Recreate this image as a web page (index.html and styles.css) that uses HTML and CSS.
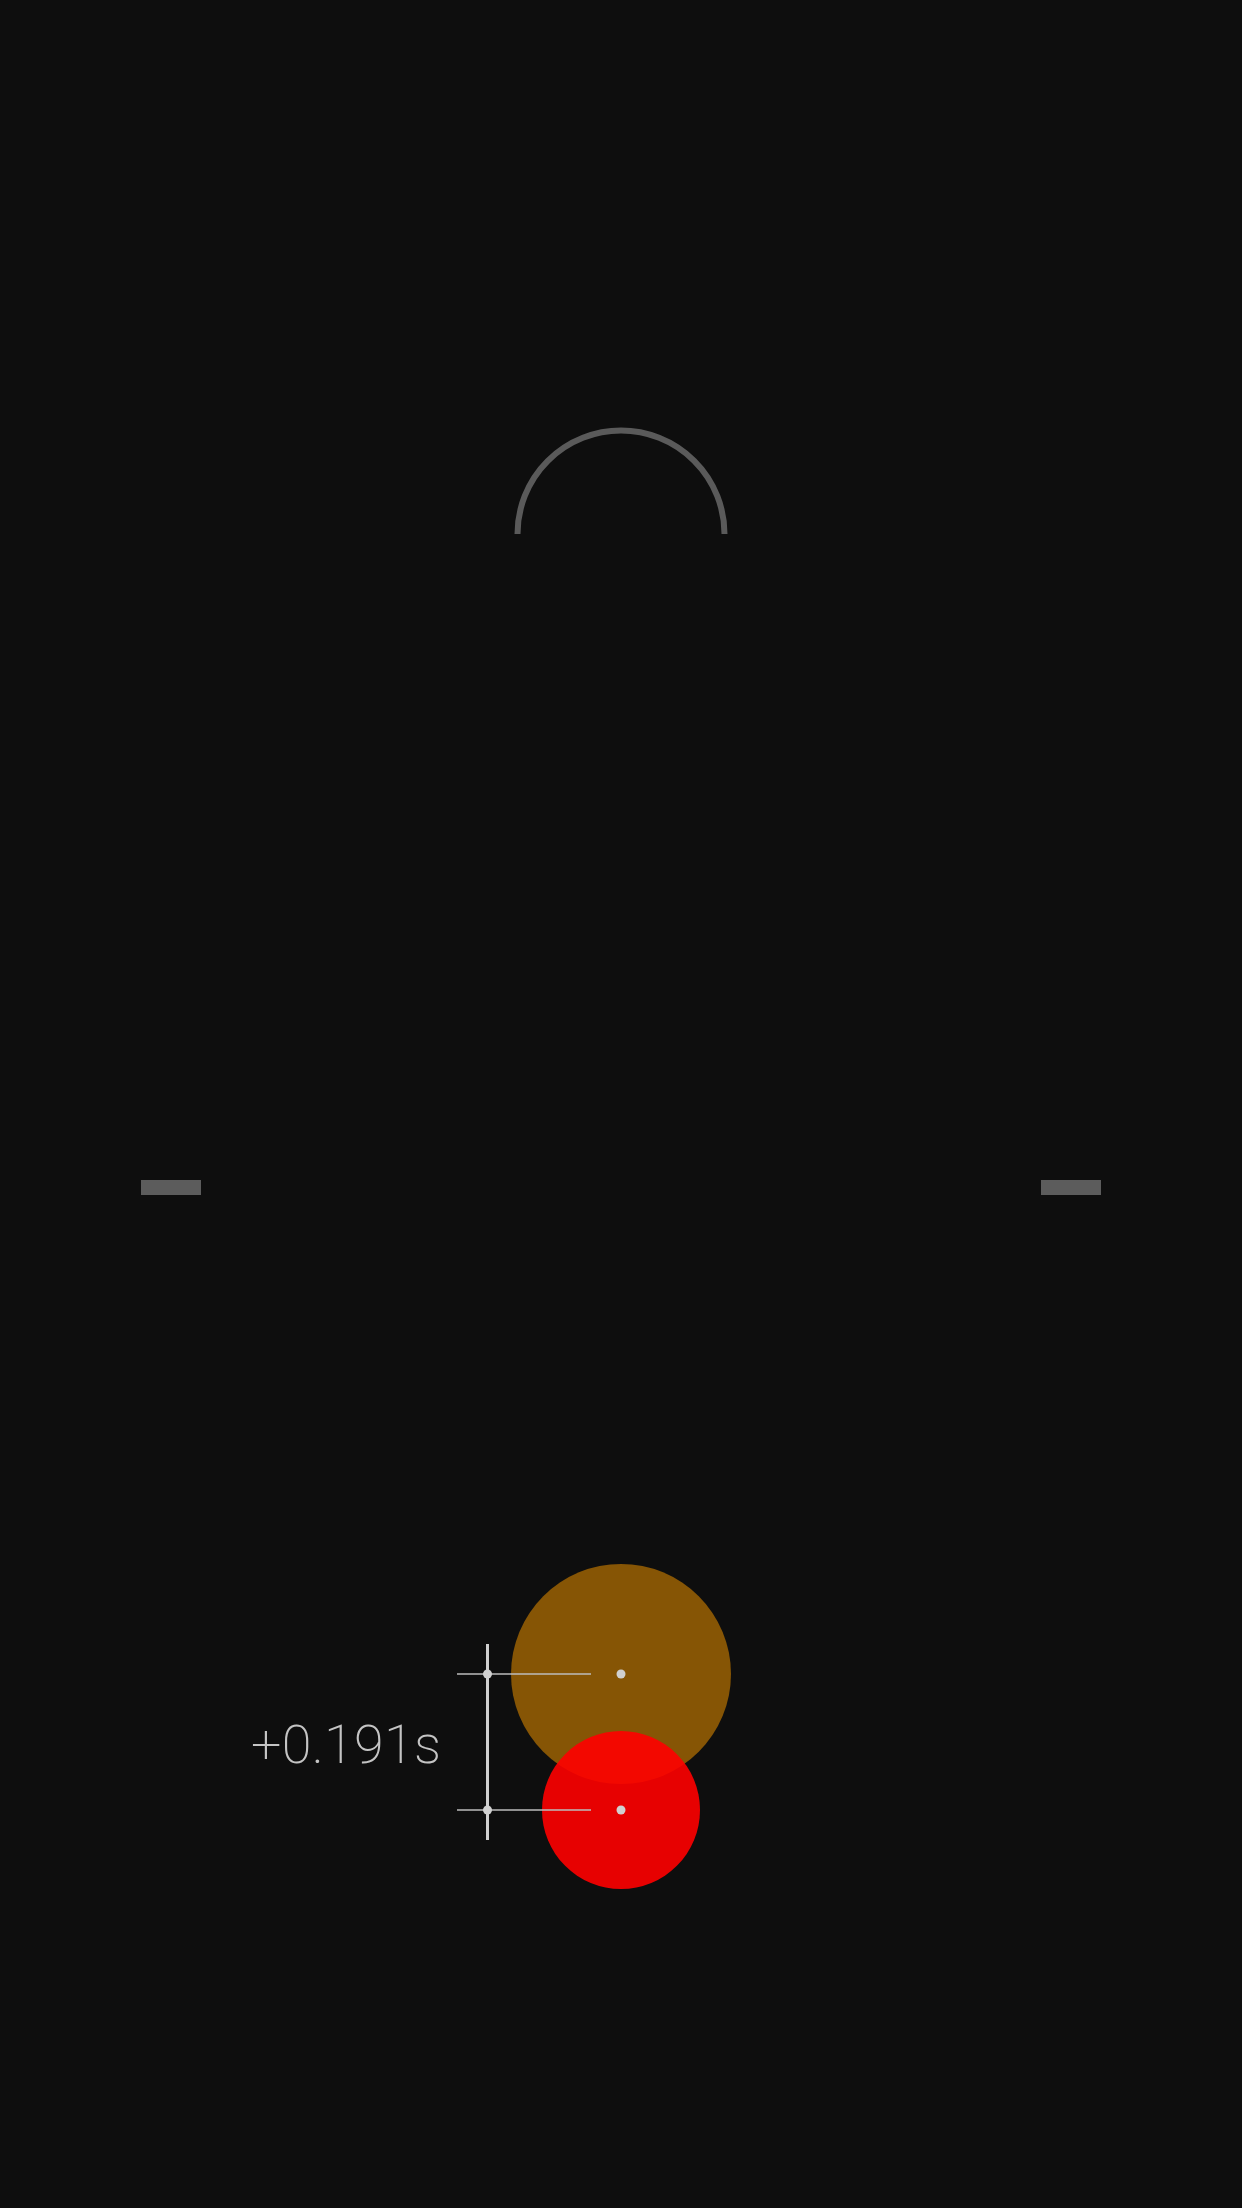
FILE: index.html
```html
<!DOCTYPE html>
<html>
<head>
<meta charset="utf-8">
<link rel="stylesheet" href="styles.css">
</head>
<body>
<main class="stage">
  <svg class="canvas" viewBox="0 0 1242 2208" width="1242" height="2208" xmlns="http://www.w3.org/2000/svg">
    <path class="arc" d="M 517.5 534 A 103.5 103.5 0 0 1 724.5 534"/>
    <rect class="dash" x="141" y="1180" width="60" height="15"/>
    <rect class="dash" x="1041" y="1180" width="60" height="15"/>
    <circle class="ball-brown" cx="621" cy="1674" r="110"/>
    <circle class="ball-red" cx="621" cy="1810" r="79"/>
    <line class="tick" x1="457" y1="1674" x2="591" y2="1674"/>
    <line class="tick" x1="457" y1="1810" x2="591" y2="1810"/>
    <line class="bar" x1="487.5" y1="1644" x2="487.5" y2="1840"/>
    <circle class="dot" cx="487.5" cy="1674" r="4.5"/>
    <circle class="dot" cx="487.5" cy="1810" r="4.5"/>
    <circle class="dot" cx="621" cy="1674" r="4.5"/>
    <circle class="dot" cx="621" cy="1810" r="4.5"/>
    <text class="delta" x="441" y="1763" text-anchor="end" textLength="190" lengthAdjust="spacing">+0.191s</text>
  </svg>
</main>
</body>
</html>
```
FILE: styles.css
```css
html, body {
  margin: 0;
  padding: 0;
  background: #0e0e0e;
}
.stage {
  width: 1242px;
  height: 2208px;
  overflow: hidden;
}
.canvas {
  display: block;
}
.arc {
  fill: none;
  stroke: #5a5a5a;
  stroke-width: 6;
}
.dash {
  fill: #5c5c5c;
}
.ball-brown {
  fill: #865505;
}
.ball-red {
  fill: rgba(255, 0, 0, 0.9);
}
.tick {
  stroke: #bdbdbd;
  stroke-width: 1.6;
}
.bar {
  stroke: #cfcfcf;
  stroke-width: 3;
}
.dot {
  fill: #d0d0d0;
}
.delta {
  font-family: Roboto, "Liberation Sans", sans-serif;
  font-weight: 200;
  font-size: 54px;
  fill: #c4c4c4;
}
```
